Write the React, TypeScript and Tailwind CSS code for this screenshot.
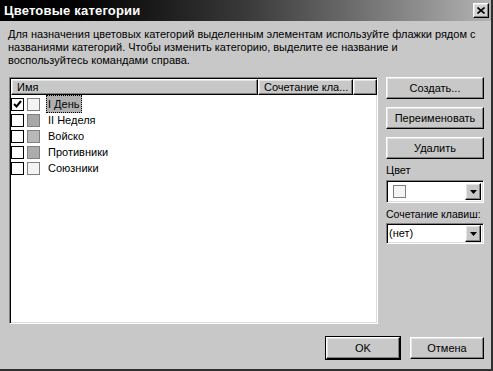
import React from "react";

const raised =
  "border border-t-white border-l-white border-r-black border-b-black shadow-[inset_-1px_-1px_#808080,inset_1px_1px_#e4e4e4]";
const sunken =
  "border border-t-[#808080] border-l-[#808080] border-r-white border-b-white shadow-[inset_1px_1px_#000,inset_-1px_-1px_#dcdcdc]";

const rows = [
  { name: "I День", checked: true, color: "bg-[#f4f4f4]", selected: true },
  { name: "II Неделя", checked: false, color: "bg-[#a8a8a8]" },
  { name: "Войско", checked: false, color: "bg-[#b8b8b8]" },
  { name: "Противники", checked: false, color: "bg-[#acacac]" },
  { name: "Союзники", checked: false, color: "bg-[#f4f4f4]" },
];

function Button({ label, def }: { label: string; def?: boolean }) {
  return (
    <div
      className={`flex h-[22px] items-center justify-center text-[11px] text-black ${
        def ? "outline outline-1 outline-black " : ""
      }${raised}`}
    >
      {label}
    </div>
  );
}

function Arrow() {
  return (
    <div className={`flex h-[17px] w-[16px] items-center justify-center bg-[#c8c8c8] ${raised}`}>
      <svg width="7" height="4" viewBox="0 0 7 4">
        <path d="M0 0h7L3.5 4z" fill="#000" />
      </svg>
    </div>
  );
}

export default function App() {
  return (
    <div
      className="flex h-[371px] w-[493px] flex-col border-r-2 border-b-2 border-[#303030] bg-[#c8c8c8]"
      style={{ fontFamily: "'Liberation Sans', Arial, sans-serif" }}
    >
      {/* Title bar */}
      <div className="flex h-[21px] items-center justify-between bg-gradient-to-r from-black via-[#3a3a3a] to-[#b4b4b4] pl-[4px] pr-[2px]">
        <span className="text-[13px] font-bold tracking-[0.2px] text-white">Цветовые категории</span>
        <div className={`flex h-[15px] w-[16px] items-center justify-center bg-[#d0d0d0] ${raised}`}>
          <svg width="8" height="7" viewBox="0 0 8 7">
            <path d="M0.5 0.5l7 6M7.5 0.5l-7 6" stroke="#000" strokeWidth="1.6" />
          </svg>
        </div>
      </div>

      {/* Description */}
      <p className="mt-[7px] whitespace-nowrap px-[8px] text-[11px] leading-[13px] text-black">
        Для назначения цветовых категорий выделенным элементам используйте флажки рядом с
        <br />
        названиями категорий. Чтобы изменить категорию, выделите ее название и
        <br />
        воспользуйтесь командами справа.
      </p>

      <div className="mt-[10px] flex gap-[8px] pl-[9px]">
        {/* List */}
        <div className={`flex h-[247px] w-[369px] flex-col bg-white ${sunken}`}>
          <div className="ml-[1px] mt-[1px] flex h-[16px] text-[11px]">
            <div className={`flex w-[247px] items-center bg-[#c8c8c8] pl-[5px] ${raised}`}>Имя</div>
            <div className={`flex w-[95px] items-center bg-[#c8c8c8] pl-[5px] ${raised}`}>
              Сочетание кла...
            </div>
            <div className={`flex-1 bg-[#c8c8c8] ${raised}`} />
          </div>
          <div className="mt-[1px] flex flex-col pl-[1px]">
            {rows.map((r) => (
              <div key={r.name} className="flex h-[16px] items-center gap-[3px] text-[11px]">
                <div className="flex h-[13px] w-[13px] items-center justify-center border border-black bg-white">
                  {r.checked && (
                    <svg width="9" height="8" viewBox="0 0 9 8">
                      <path d="M1 4l2.5 2.5L8 1" stroke="#000" strokeWidth="2" fill="none" />
                    </svg>
                  )}
                </div>
                <div className={`h-[13px] w-[13px] border border-[#808080] ${r.color}`} />
                <span
                  className={`ml-[3px] px-[1px] ${
                    r.selected ? "border border-dotted border-black bg-[#b0b0b0]" : "border border-transparent"
                  }`}
                >
                  {r.name}
                </span>
              </div>
            ))}
          </div>
        </div>

        {/* Right column */}
        <div className="flex w-[98px] flex-col">
          <Button label="Создать..." />
          <div className="mt-[8px]">
            <Button label="Переименовать" />
          </div>
          <div className="mt-[8px]">
            <Button label="Удалить" />
          </div>
          <span className="mt-[1px] text-[11px] leading-[20px]">Цвет</span>
          <div className={`flex h-[23px] items-center justify-between bg-white pl-[6px] pr-[2px] ${sunken}`}>
            <div className="h-[13px] w-[13px] border border-[#808080] bg-[#f4f4f4]" />
            <Arrow />
          </div>
          <span className="mt-[2px] whitespace-nowrap text-[10.5px] leading-[18px]">Сочетание клавиш:</span>
          <div className={`flex h-[21px] items-center justify-between bg-white pl-[2px] pr-[2px] text-[11px] ${sunken}`}>
            <span>(нет)</span>
            <Arrow />
          </div>
        </div>
      </div>

      {/* Footer */}
      <div className="mt-[13px] flex justify-end gap-[10px] pr-[7px]">
        <div className="w-[74px]">
          <Button label="OK" def />
        </div>
        <div className="w-[74px]">
          <Button label="Отмена" />
        </div>
      </div>
    </div>
  );
}
